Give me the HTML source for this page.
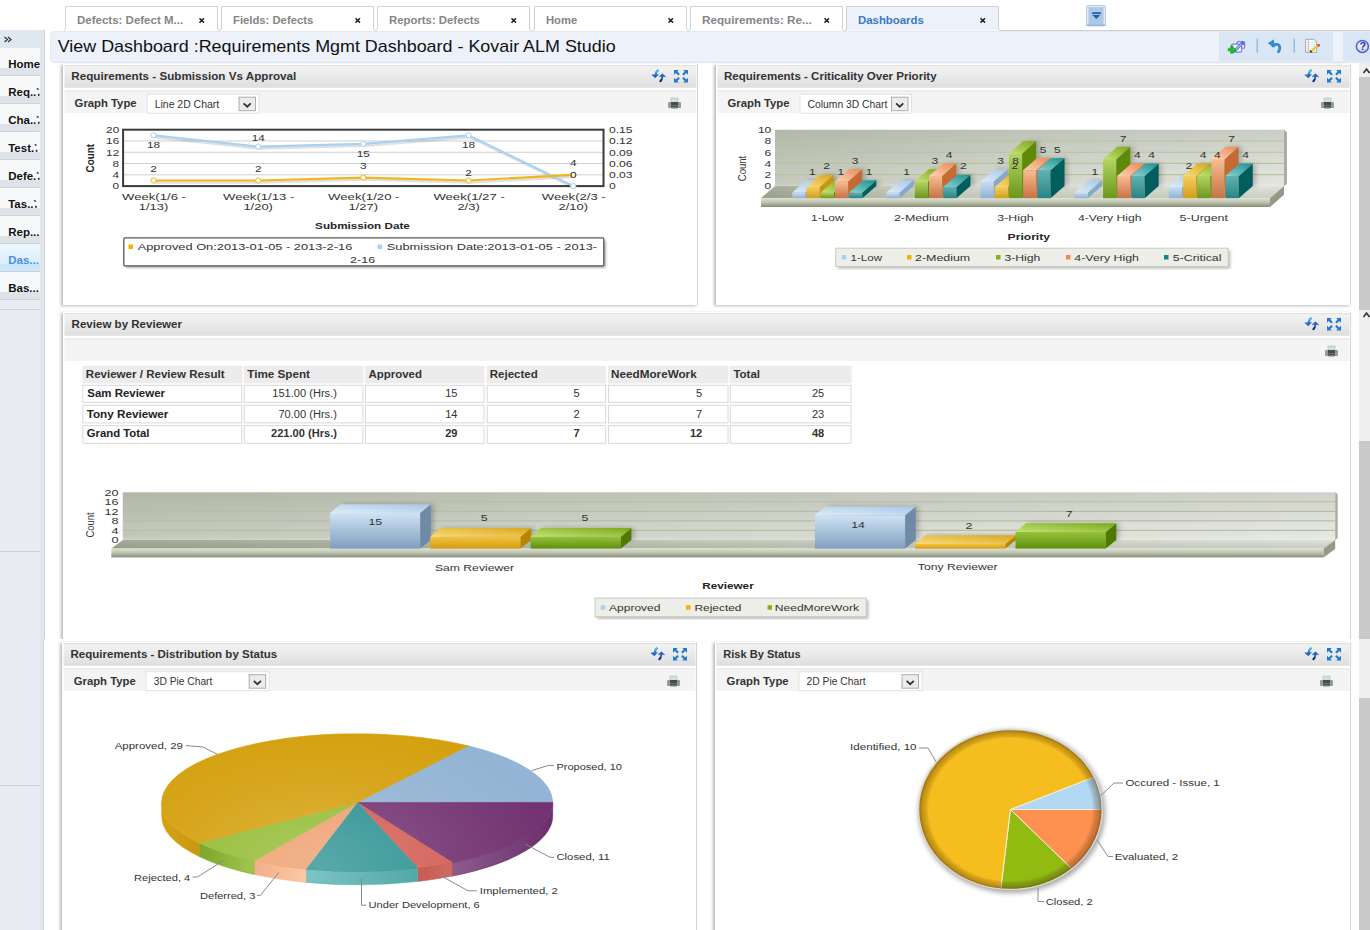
<!DOCTYPE html>
<html><head><meta charset="utf-8"><style>
html,body{margin:0;padding:0;background:#fff;width:1370px;height:930px;overflow:hidden}
svg{display:block;font-family:"Liberation Sans",sans-serif}
</style></head><body>
<svg width="1370" height="930" viewBox="0 0 1370 930">
<defs>
<linearGradient id="gHead" x1="0" y1="0" x2="0" y2="1"><stop offset="0" stop-color="#f4f4f4"/><stop offset="1" stop-color="#dedede"/></linearGradient>
<linearGradient id="gSide" x1="0" y1="0" x2="0" y2="1"><stop offset="0" stop-color="#f9fafb"/><stop offset="1" stop-color="#f3f5f7"/></linearGradient>
<linearGradient id="gSideSel" x1="0" y1="0" x2="0" y2="1"><stop offset="0" stop-color="#eef7fd"/><stop offset="1" stop-color="#d6eefb"/></linearGradient>
<filter id="shadow" x="-5%" y="-5%" width="110%" height="110%"><feGaussianBlur stdDeviation="1.4"/></filter>

<linearGradient id="gWall" x1="0" y1="0" x2="1" y2="0"><stop offset="0" stop-color="#c6cbbe"/><stop offset="0.5" stop-color="#d6d9cf"/><stop offset="1" stop-color="#e4e6df"/></linearGradient><linearGradient id="gWallV" x1="0" y1="0" x2="0" y2="1"><stop offset="0" stop-color="#4a5040" stop-opacity="0.16"/><stop offset="0.8" stop-color="#4a5040" stop-opacity="0.02"/><stop offset="1" stop-color="#fff" stop-opacity="0.1"/></linearGradient>
<linearGradient id="gFloor" x1="0" y1="0" x2="1" y2="0"><stop offset="0" stop-color="#a7ad9b"/><stop offset="0.12" stop-color="#b9bead"/><stop offset="0.35" stop-color="#d6d9cd"/><stop offset="1" stop-color="#e2e5dc"/></linearGradient>
<linearGradient id="gSlab" x1="0" y1="0" x2="0" y2="1"><stop offset="0" stop-color="#dde0d2"/><stop offset="0.5" stop-color="#bcc1ae"/><stop offset="1" stop-color="#848b74"/></linearGradient><linearGradient id="gFloorV" x1="0" y1="0" x2="0" y2="1"><stop offset="0" stop-color="#000" stop-opacity="0"/><stop offset="1" stop-color="#3a4a20" stop-opacity="0.14"/></linearGradient>
<linearGradient id="bBlueF" x1="0" y1="0" x2="0" y2="1"><stop offset="0" stop-color="#c9def3"/><stop offset="1" stop-color="#8fb0d2"/></linearGradient>
<linearGradient id="bYelF" x1="0" y1="0" x2="0" y2="1"><stop offset="0" stop-color="#f4cf62"/><stop offset="1" stop-color="#d29e1c"/></linearGradient>
<linearGradient id="bGrnF" x1="0" y1="0" x2="0" y2="1"><stop offset="0" stop-color="#b3d463"/><stop offset="1" stop-color="#6c961c"/></linearGradient>
<linearGradient id="bOrgF" x1="0" y1="0" x2="0" y2="1"><stop offset="0" stop-color="#f9bc94"/><stop offset="1" stop-color="#c47444"/></linearGradient>
<linearGradient id="bTealF" x1="0" y1="0" x2="0" y2="1"><stop offset="0" stop-color="#62b2b2"/><stop offset="1" stop-color="#2a8484"/></linearGradient>
<filter id="blur2" x="-30%" y="-30%" width="160%" height="160%"><feGaussianBlur stdDeviation="2.5"/></filter>

<linearGradient id="tBlue" x1="0" y1="1" x2="1" y2="0"><stop offset="0" stop-color="#dcedfa"/><stop offset="1" stop-color="#a9c7e6"/></linearGradient>
<linearGradient id="tYel" x1="0" y1="1" x2="1" y2="0"><stop offset="0" stop-color="#f9dc7a"/><stop offset="1" stop-color="#d9a61c"/></linearGradient>
<linearGradient id="tGrn" x1="0" y1="1" x2="1" y2="0"><stop offset="0" stop-color="#c4e276"/><stop offset="1" stop-color="#7aa818"/></linearGradient>
<linearGradient id="tOrg" x1="0" y1="1" x2="1" y2="0"><stop offset="0" stop-color="#fdd2b2"/><stop offset="1" stop-color="#e98a58"/></linearGradient>
<linearGradient id="tTeal" x1="0" y1="1" x2="1" y2="0"><stop offset="0" stop-color="#86d2d2"/><stop offset="1" stop-color="#1f8e8e"/></linearGradient>

<linearGradient id="cBlueF" x1="0" y1="0" x2="0" y2="1"><stop offset="0" stop-color="#cfe3f5"/><stop offset="1" stop-color="#7f9fbf"/></linearGradient>
<linearGradient id="cYelF" x1="0" y1="0" x2="0" y2="1"><stop offset="0" stop-color="#f3c440"/><stop offset="1" stop-color="#d59a10"/></linearGradient>
<linearGradient id="cGrnF" x1="0" y1="0" x2="0" y2="1"><stop offset="0" stop-color="#95c23a"/><stop offset="1" stop-color="#5f8f10"/></linearGradient>
<linearGradient id="gWall3" x1="0" y1="0" x2="1" y2="0"><stop offset="0" stop-color="#c4c9bc"/><stop offset="0.45" stop-color="#d5d8ce"/><stop offset="1" stop-color="#e8eae4"/></linearGradient>
<linearGradient id="gFloor3" x1="0" y1="0" x2="1" y2="0"><stop offset="0" stop-color="#a6ac99"/><stop offset="0.5" stop-color="#c8ccbd"/><stop offset="1" stop-color="#e0e3da"/></linearGradient>

<linearGradient id="pSideProp" x1="0" y1="0" x2="1" y2="0"><stop offset="0" stop-color="#7c98b4"/><stop offset="1" stop-color="#8aa6c2"/></linearGradient>
<linearGradient id="pSideClosed" x1="0" y1="0" x2="1" y2="0"><stop offset="0" stop-color="#8c5c8c"/><stop offset="1" stop-color="#6c2e6c"/></linearGradient>
<linearGradient id="pSideImpl" x1="0" y1="0" x2="1" y2="0"><stop offset="0" stop-color="#c85a52"/><stop offset="1" stop-color="#d06a62"/></linearGradient>
<linearGradient id="pSideUD" x1="0" y1="0" x2="1" y2="0"><stop offset="0" stop-color="#7cc4c4"/><stop offset="1" stop-color="#52a8a8"/></linearGradient>
<linearGradient id="pSideDef" x1="0" y1="0" x2="1" y2="0"><stop offset="0" stop-color="#f2b08a"/><stop offset="1" stop-color="#fcc8a4"/></linearGradient>
<linearGradient id="pSideRej" x1="0" y1="0" x2="1" y2="0"><stop offset="0" stop-color="#7ea42a"/><stop offset="1" stop-color="#a2c650"/></linearGradient>
<linearGradient id="pSideApp" x1="0" y1="0" x2="1" y2="0"><stop offset="0" stop-color="#d8a010"/><stop offset="1" stop-color="#c89814"/></linearGradient>
<radialGradient id="pTopShade" cx="0.5" cy="0.5" r="0.5"><stop offset="0" stop-color="#fff" stop-opacity="0.18"/><stop offset="0.7" stop-color="#fff" stop-opacity="0.08"/><stop offset="1" stop-color="#000" stop-opacity="0.0"/></radialGradient>
<radialGradient id="pOver" gradientUnits="userSpaceOnUse" cx="320" cy="865" r="190" gradientTransform="translate(320,865) scale(1.25,0.75) translate(-320,-865)"><stop offset="0" stop-color="#fff" stop-opacity="0.22"/><stop offset="0.6" stop-color="#fff" stop-opacity="0.07"/><stop offset="1" stop-color="#fff" stop-opacity="0"/></radialGradient>
<radialGradient id="q5rim" cx="0.5" cy="0.5" r="0.5"><stop offset="0.89" stop-color="#000" stop-opacity="0"/><stop offset="0.96" stop-color="#5a3a00" stop-opacity="0.33"/><stop offset="1" stop-color="#3a2400" stop-opacity="0.55"/></radialGradient>
</defs>
<rect x="0" y="0" width="1370" height="930" fill="#ffffff" />
<rect x="0" y="30" width="40" height="900" fill="#e8ebf1" />
<rect x="40" y="30" width="4" height="900" fill="#e6e6e6" />
<line x1="44.5" y1="30" x2="44.5" y2="639" stroke="#c4d4ea" stroke-width="1" />
<line x1="43.5" y1="639" x2="43.5" y2="930" stroke="#c4d4ea" stroke-width="1" />
<rect x="0" y="30" width="40" height="18" fill="#dfe7f1" />
<path d="M4.5,37 L7.5,39.5 L4.5,42 M8,37 L11,39.5 L8,42" fill="none" stroke="#333" stroke-width="1.2"/>
<rect x="0" y="48" width="40" height="20" fill="#f7f8fa" />
<rect x="0" y="68" width="40" height="7" fill="#dee3ea" />
<rect x="0" y="75" width="40" height="1" fill="#cdd2d9" />
<rect x="0" y="76" width="40" height="20" fill="#f7f8fa" />
<rect x="0" y="96" width="40" height="7" fill="#dee3ea" />
<rect x="0" y="103" width="40" height="1" fill="#cdd2d9" />
<rect x="0" y="104" width="40" height="20" fill="#f7f8fa" />
<rect x="0" y="124" width="40" height="7" fill="#dee3ea" />
<rect x="0" y="131" width="40" height="1" fill="#cdd2d9" />
<rect x="0" y="132" width="40" height="20" fill="#f7f8fa" />
<rect x="0" y="152" width="40" height="7" fill="#dee3ea" />
<rect x="0" y="159" width="40" height="1" fill="#cdd2d9" />
<rect x="0" y="160" width="40" height="20" fill="#f7f8fa" />
<rect x="0" y="180" width="40" height="7" fill="#dee3ea" />
<rect x="0" y="187" width="40" height="1" fill="#cdd2d9" />
<rect x="0" y="188" width="40" height="20" fill="#f7f8fa" />
<rect x="0" y="208" width="40" height="7" fill="#dee3ea" />
<rect x="0" y="215" width="40" height="1" fill="#cdd2d9" />
<rect x="0" y="216" width="40" height="20" fill="#f7f8fa" />
<rect x="0" y="236" width="40" height="7" fill="#dee3ea" />
<rect x="0" y="243" width="40" height="1" fill="#cdd2d9" />
<rect x="0" y="244" width="40" height="20" fill="url(#gSideSel)" />
<rect x="0" y="264" width="40" height="7" fill="#c9e7f9" />
<rect x="0" y="271" width="40" height="1" fill="#cdd2d9" />
<rect x="0" y="272" width="40" height="20" fill="#f7f8fa" />
<rect x="0" y="292" width="40" height="7" fill="#dee3ea" />
<rect x="0" y="299" width="40" height="1" fill="#cdd2d9" />
<clipPath id="sideClip"><rect x="0" y="30" width="40" height="300"/></clipPath>
<g clip-path="url(#sideClip)">
<text x="8.2" y="67.8" font-size="11.5" fill="#111" font-weight="bold" >Home</text>
<text x="8.2" y="95.8" font-size="11.5" fill="#111" font-weight="bold" >Req..</text>
<path d="M36.915703125,88.2 L38.515703125,89.6" stroke="#1a4a80" stroke-width="1.5"/>
<rect x="37.915703125" y="93.8" width="1.6" height="2" fill="#222"/>
<text x="8.2" y="123.8" font-size="11.5" fill="#111" font-weight="bold" >Cha..</text>
<path d="M36.915703125,116.2 L38.515703125,117.6" stroke="#1a4a80" stroke-width="1.5"/>
<rect x="37.915703125" y="121.8" width="1.6" height="2" fill="#222"/>
<text x="8.2" y="151.8" font-size="11.5" fill="#111" font-weight="bold" >Test.</text>
<path d="M34.788203125,144.2 L36.388203125000004,145.6" stroke="#1a4a80" stroke-width="1.5"/>
<rect x="35.788203125" y="149.8" width="1.6" height="2" fill="#222"/>
<text x="8.2" y="179.8" font-size="11.5" fill="#111" font-weight="bold" >Defe.</text>
<path d="M36.9219921875,172.2 L38.521992187500004,173.6" stroke="#1a4a80" stroke-width="1.5"/>
<rect x="37.9219921875" y="177.8" width="1.6" height="2" fill="#222"/>
<text x="8.2" y="207.8" font-size="11.5" fill="#111" font-weight="bold" >Tas..</text>
<path d="M34.1530078125,200.2 L35.7530078125,201.6" stroke="#1a4a80" stroke-width="1.5"/>
<rect x="35.1530078125" y="205.8" width="1.6" height="2" fill="#222"/>
<text x="8.2" y="235.8" font-size="11.5" fill="#111" font-weight="bold" >Rep...</text>
<text x="8.2" y="263.8" font-size="11.5" fill="#4a8ee0" font-weight="bold" >Das...</text>
<text x="8.2" y="291.8" font-size="11.5" fill="#111" font-weight="bold" >Bas...</text>
</g>
<rect x="0" y="301" width="40" height="8" fill="#e8ebf0" />
<rect x="0" y="309" width="40" height="1" fill="#cdd2d9" />
<rect x="0" y="551" width="40" height="1" fill="#cdd2d9" />
<rect x="0" y="785" width="40" height="1" fill="#cdd2d9" />
<rect x="40" y="48" width="4" height="262" fill="#e6e6e6" />
<path d="M63.5,30.5 L65.5,29.5 L65.5,6.5 L217.5,6.5 L217.5,29.5 L219.5,30.5" fill="#fff" stroke="#d2d2d2" stroke-width="1"/>
<text x="77.0" y="23.8" font-size="10.6" fill="#858585" font-weight="bold" textLength="106.1" lengthAdjust="spacingAndGlyphs" >Defects: Defect M...</text>
<path d="M199.5,18.2 L204,22.6 M204,18.2 L199.5,22.6" stroke="#222" stroke-width="1.5"/>
<path d="M219.5,30.5 L221.5,29.5 L221.5,6.5 L373.5,6.5 L373.5,29.5 L375.5,30.5" fill="#fff" stroke="#d2d2d2" stroke-width="1"/>
<text x="233.0" y="23.8" font-size="10.6" fill="#858585" font-weight="bold" textLength="80.2" lengthAdjust="spacingAndGlyphs" >Fields: Defects</text>
<path d="M355.5,18.2 L360,22.6 M360,18.2 L355.5,22.6" stroke="#222" stroke-width="1.5"/>
<path d="M375.5,30.5 L377.5,29.5 L377.5,6.5 L529.5,6.5 L529.5,29.5 L531.5,30.5" fill="#fff" stroke="#d2d2d2" stroke-width="1"/>
<text x="389.0" y="23.8" font-size="10.6" fill="#858585" font-weight="bold" textLength="90.9" lengthAdjust="spacingAndGlyphs" >Reports: Defects</text>
<path d="M511.5,18.2 L516,22.6 M516,18.2 L511.5,22.6" stroke="#222" stroke-width="1.5"/>
<path d="M532.5,30.5 L534.5,29.5 L534.5,6.5 L686.5,6.5 L686.5,29.5 L688.5,30.5" fill="#fff" stroke="#d2d2d2" stroke-width="1"/>
<text x="546.0" y="23.8" font-size="10.6" fill="#858585" font-weight="bold" textLength="31.2" lengthAdjust="spacingAndGlyphs" >Home</text>
<path d="M668.5,18.2 L673,22.6 M673,18.2 L668.5,22.6" stroke="#222" stroke-width="1.5"/>
<path d="M688.5,30.5 L690.5,29.5 L690.5,6.5 L842.5,6.5 L842.5,29.5 L844.5,30.5" fill="#fff" stroke="#d2d2d2" stroke-width="1"/>
<text x="702.0" y="23.8" font-size="10.6" fill="#858585" font-weight="bold" textLength="109.8" lengthAdjust="spacingAndGlyphs" >Requirements: Re...</text>
<path d="M824.5,18.2 L829,22.6 M829,18.2 L824.5,22.6" stroke="#222" stroke-width="1.5"/>
<path d="M844.5,30.5 L846.5,29.5 L846.5,6.5 L998.5,6.5 L998.5,29.5 L1000.5,30.5" fill="#edf2fa" stroke="#d2d2d2" stroke-width="1"/>
<text x="858.0" y="23.8" font-size="10.6" fill="#3b78c4" font-weight="bold" textLength="65.8" lengthAdjust="spacingAndGlyphs" >Dashboards</text>
<path d="M980.5,18.2 L985,22.6 M985,18.2 L980.5,22.6" stroke="#222" stroke-width="1.5"/>
<line x1="999" y1="30.5" x2="1370" y2="30.5" stroke="#d0d0d0" stroke-width="1" />
<rect x="1086.5" y="5.5" width="19" height="20.5" rx="1.5" fill="#dce8f6" stroke="#bcd0ea" stroke-width="1"/>
<rect x="1088.5" y="7.2" width="15" height="18" fill="#afc8e6"/>
<rect x="1086.5" y="24.5" width="19" height="1.5" fill="#9cb6d8"/>
<path d="M1092.4,15.1 L1100.3,15.1 L1096.35,19 Z" fill="#1a5cb0"/><rect x="1091.9" y="12.2" width="9.3" height="1.8" rx="0.8" fill="#1a5cb0"/>
<rect x="50" y="31" width="1330" height="31.5" rx="4" fill="#edf2fa"/>
<rect x="50.5" y="31.5" width="1330" height="31" rx="4" fill="none" stroke="#e3eaf4" stroke-width="1"/>
<line x1="54" y1="60.6" x2="1370" y2="60.6" stroke="#f2f5fb" stroke-width="1" />
<line x1="54" y1="62" x2="1370" y2="62" stroke="#dfe7f3" stroke-width="1.4" />
<rect x="1219" y="32" width="114" height="29" fill="#dbe6f4" />
<rect x="1343" y="32" width="27" height="29" fill="#dbe6f4" />
<rect x="1237.2" y="41.6" width="7.4" height="6.6" rx="1" fill="#fff" stroke="#6c80e2" stroke-width="1.2"/>
<rect x="1231.6" y="44.2" width="10" height="8" rx="1.2" fill="#f4f6ff" stroke="#6c80e2" stroke-width="1.2"/>
<path d="M1235,50.5 L1242.5,43" stroke="#4a62d0" stroke-width="2.6" stroke-linecap="round"/>
<path d="M1235,50.5 L1242.5,43" stroke="#fff" stroke-width="1" stroke-linecap="round"/>
<path d="M1240.3,42.2 L1243.8,42.2 L1243.8,45.7 Z" fill="#4a62d0"/>
<path d="M1230.5,46 L1233.3,46 L1233.3,48.4 L1235.6,48.4 L1235.6,51.1 L1233.3,51.1 L1233.3,53.2 L1230.5,53.2 L1230.5,51.1 L1228.2,51.1 L1228.2,48.4 L1230.5,48.4 Z" fill="#1fbf2a" stroke="#0a9a12" stroke-width="0.5"/>
<line x1="1257.2" y1="38.8" x2="1257.2" y2="52.6" stroke="#93bde2" stroke-width="1.5" />
<line x1="1294.2" y1="38.8" x2="1294.2" y2="52.6" stroke="#93bde2" stroke-width="1.5" />
<path d="M1272.8,45.8 C1275.5,43.6 1279.2,43.8 1279.8,47.2 C1280,49 1279.3,50.6 1278.5,51.8" fill="none" stroke="#2f8bd2" stroke-width="2.8" stroke-linecap="round"/>
<path d="M1268.3,43.3 L1273.6,39.9 L1274.3,47.2 Z" fill="#2f8bd2" stroke="#2f8bd2" stroke-width="0.8" stroke-linejoin="round"/>
<path d="M1305.6,39.4 L1314,39.4 L1316.6,42 L1316.6,52.4 L1305.6,52.4 Z" fill="#fdfdfd" stroke="#9aa6a6" stroke-width="0.9"/>
<line x1="1306" y1="42.5" x2="1316.2" y2="42.5" stroke="#cfe0f0" stroke-width="0.6" />
<line x1="1306" y1="44.6" x2="1316.2" y2="44.6" stroke="#cfe0f0" stroke-width="0.6" />
<line x1="1306" y1="46.7" x2="1316.2" y2="46.7" stroke="#cfe0f0" stroke-width="0.6" />
<line x1="1306" y1="48.8" x2="1316.2" y2="48.8" stroke="#cfe0f0" stroke-width="0.6" />
<line x1="1306" y1="50.9" x2="1316.2" y2="50.9" stroke="#cfe0f0" stroke-width="0.6" />
<line x1="1308.4" y1="39.8" x2="1308.4" y2="52" stroke="#f0a0a0" stroke-width="0.9" />
<path d="M1310.3,52 L1318.2,45.2" stroke="#e9c93a" stroke-width="2.4" stroke-linecap="butt"/>
<path d="M1310.3,52 L1311.4,51" stroke="#333" stroke-width="2.4"/>
<circle cx="1318.6" cy="45.3" r="1.4" fill="#e84050"/>
<defs><radialGradient id="gHelp" cx="0.4" cy="0.35" r="0.7"><stop offset="0" stop-color="#ffffff"/><stop offset="1" stop-color="#c9cbd4"/></radialGradient></defs>
<circle cx="1362.4" cy="46.4" r="6" fill="url(#gHelp)" stroke="#4b5fe2" stroke-width="1.5"/>
<text x="1362.6" y="50.3" font-size="10.5" font-weight="bold" fill="#1a30b0" text-anchor="middle">?</text>
<text x="57.7" y="51.7" font-size="17" fill="#111" textLength="558.0" lengthAdjust="spacingAndGlyphs" >View Dashboard :Requirements Mgmt Dashboard - Kovair ALM Studio</text>
<rect x="1359" y="63" width="11" height="867" fill="#efefef" />
<rect x="1359" y="77" width="11" height="233" fill="#c9c9c9" />
<rect x="1359" y="441" width="11" height="198" fill="#c9c9c9" />
<rect x="1359" y="698" width="11" height="232" fill="#c9c9c9" />
<path d="M1363.5,73 L1366.5,69 L1369.5,73" fill="none" stroke="#333" stroke-width="1.6"/>
<path d="M1363.5,317 L1366.5,313 L1369.5,317" fill="none" stroke="#333" stroke-width="1.6"/>
<rect x="61" y="65" width="635" height="241" fill="#bbb" filter="url(#shadow)"/>
<rect x="63" y="64" width="635" height="241" fill="#fff" />
<line x1="697.5" y1="64" x2="697.5" y2="305" stroke="#d6d6d6" stroke-width="1" />
<rect x="64.5" y="65" width="632" height="22.8" fill="url(#gHead)" />
<line x1="64.5" y1="65.6" x2="696.5" y2="65.6" stroke="#e2e2e2" stroke-width="1.2" />
<rect x="64.5" y="90.3" width="632" height="22.7" fill="#f4f4f4" />
<line x1="64.5" y1="90.9" x2="696.5" y2="90.9" stroke="#e8e8e8" stroke-width="1.4" />
<text x="71.3" y="80.0" font-size="10.6" fill="#333" font-weight="bold" textLength="225.0" lengthAdjust="spacingAndGlyphs" >Requirements - Submission Vs Approval</text>
<rect x="714" y="65" width="635" height="241" fill="#bbb" filter="url(#shadow)"/>
<rect x="716" y="64" width="635" height="241" fill="#fff" />
<line x1="1350.5" y1="64" x2="1350.5" y2="305" stroke="#d6d6d6" stroke-width="1" />
<rect x="717.5" y="65" width="632" height="22.8" fill="url(#gHead)" />
<line x1="717.5" y1="65.6" x2="1349.5" y2="65.6" stroke="#e2e2e2" stroke-width="1.2" />
<rect x="717.5" y="90.3" width="632" height="22.7" fill="#f4f4f4" />
<line x1="717.5" y1="90.9" x2="1349.5" y2="90.9" stroke="#e8e8e8" stroke-width="1.4" />
<text x="724.0" y="80.0" font-size="10.6" fill="#333" font-weight="bold" textLength="212.6" lengthAdjust="spacingAndGlyphs" >Requirements - Criticality Over Priority</text>
<rect x="61" y="313" width="1288" height="327" fill="#bbb" filter="url(#shadow)"/>
<rect x="63" y="312" width="1288" height="327" fill="#fff" />
<line x1="1350.5" y1="312" x2="1350.5" y2="639" stroke="#d6d6d6" stroke-width="1" />
<rect x="64.5" y="313" width="1285" height="22.8" fill="url(#gHead)" />
<line x1="64.5" y1="313.6" x2="1349.5" y2="313.6" stroke="#e2e2e2" stroke-width="1.2" />
<rect x="64.5" y="338.3" width="1285" height="22.7" fill="#f4f4f4" />
<line x1="64.5" y1="338.9" x2="1349.5" y2="338.9" stroke="#e8e8e8" stroke-width="1.4" />
<text x="71.6" y="328.0" font-size="10.6" fill="#333" font-weight="bold" textLength="110.4" lengthAdjust="spacingAndGlyphs" >Review by Reviewer</text>
<rect x="50" y="639" width="1303" height="3.5" fill="#fff" />
<rect x="60" y="643" width="635" height="298" fill="#bbb" filter="url(#shadow)"/>
<rect x="62" y="642" width="635" height="298" fill="#fff" />
<line x1="696.5" y1="642" x2="696.5" y2="940" stroke="#d6d6d6" stroke-width="1" />
<rect x="63.5" y="643" width="632" height="22.8" fill="url(#gHead)" />
<line x1="63.5" y1="643.6" x2="695.5" y2="643.6" stroke="#e2e2e2" stroke-width="1.2" />
<rect x="63.5" y="668.3" width="632" height="22.7" fill="#f4f4f4" />
<line x1="63.5" y1="668.9" x2="695.5" y2="668.9" stroke="#e8e8e8" stroke-width="1.4" />
<text x="70.5" y="658.0" font-size="10.6" fill="#333" font-weight="bold" textLength="206.7" lengthAdjust="spacingAndGlyphs" >Requirements - Distribution by Status</text>
<rect x="713" y="643" width="636" height="298" fill="#bbb" filter="url(#shadow)"/>
<rect x="715" y="642" width="636" height="298" fill="#fff" />
<line x1="1350.5" y1="642" x2="1350.5" y2="940" stroke="#d6d6d6" stroke-width="1" />
<rect x="716.5" y="643" width="633" height="22.8" fill="url(#gHead)" />
<line x1="716.5" y1="643.6" x2="1349.5" y2="643.6" stroke="#e2e2e2" stroke-width="1.2" />
<rect x="716.5" y="668.3" width="633" height="22.7" fill="#f4f4f4" />
<line x1="716.5" y1="668.9" x2="1349.5" y2="668.9" stroke="#e8e8e8" stroke-width="1.4" />
<text x="723.3" y="658.0" font-size="10.6" fill="#333" font-weight="bold" textLength="77.4" lengthAdjust="spacingAndGlyphs" >Risk By Status</text>
<g transform="translate(652,70)"><path d="M5.7,0.5 C4.5,1.6 3.7,3.1 3.5,5.2" fill="none" stroke="#2a82d4" stroke-width="2.1" stroke-linecap="round"/><path d="M5.7,0.5 C5.2,1.0 4.8,1.5 4.5,2.0" fill="none" stroke="#3cc0ea" stroke-width="1.9" stroke-linecap="round"/><path d="M-0.2,4.9 L6.5,4.4 L3.4,7.9 Z" fill="#2466c6" stroke="#2466c6" stroke-width="0.5" stroke-linejoin="round"/><path d="M7.1,6.6 L10.4,3.7 L13.7,6.6 Z" fill="#2a66c4" stroke="#2a66c4" stroke-width="0.5" stroke-linejoin="round"/><path d="M10.5,6.2 C10.3,8.3 9.6,10.1 8.4,11.2" fill="none" stroke="#2a5cb8" stroke-width="1.9" stroke-linecap="round"/><path d="M9.3,9.9 C9.0,10.4 8.7,10.8 8.4,11.2" fill="none" stroke="#1c2c6c" stroke-width="1.9" stroke-linecap="round"/></g>
<g transform="translate(674,70)" fill="#2179cf"><path d="M0,0 L4.8,0 L3.3,1.5 L5.8,4 L4.3,5.5 L1.8,3 L0,4.8 Z"/><path d="M14,0 L9.2,0 L10.7,1.5 L8.2,4 L9.7,5.5 L12.2,3 L14,4.8 Z"/><path d="M0,12.5 L4.8,12.5 L3.3,11 L5.8,8.5 L4.3,7 L1.8,9.5 L0,7.7 Z"/><path d="M14,12.5 L9.2,12.5 L10.7,11 L8.2,8.5 L9.7,7 L12.2,9.5 L14,7.7 Z"/></g>
<g transform="translate(1305,70)"><path d="M5.7,0.5 C4.5,1.6 3.7,3.1 3.5,5.2" fill="none" stroke="#2a82d4" stroke-width="2.1" stroke-linecap="round"/><path d="M5.7,0.5 C5.2,1.0 4.8,1.5 4.5,2.0" fill="none" stroke="#3cc0ea" stroke-width="1.9" stroke-linecap="round"/><path d="M-0.2,4.9 L6.5,4.4 L3.4,7.9 Z" fill="#2466c6" stroke="#2466c6" stroke-width="0.5" stroke-linejoin="round"/><path d="M7.1,6.6 L10.4,3.7 L13.7,6.6 Z" fill="#2a66c4" stroke="#2a66c4" stroke-width="0.5" stroke-linejoin="round"/><path d="M10.5,6.2 C10.3,8.3 9.6,10.1 8.4,11.2" fill="none" stroke="#2a5cb8" stroke-width="1.9" stroke-linecap="round"/><path d="M9.3,9.9 C9.0,10.4 8.7,10.8 8.4,11.2" fill="none" stroke="#1c2c6c" stroke-width="1.9" stroke-linecap="round"/></g>
<g transform="translate(1327,70)" fill="#2179cf"><path d="M0,0 L4.8,0 L3.3,1.5 L5.8,4 L4.3,5.5 L1.8,3 L0,4.8 Z"/><path d="M14,0 L9.2,0 L10.7,1.5 L8.2,4 L9.7,5.5 L12.2,3 L14,4.8 Z"/><path d="M0,12.5 L4.8,12.5 L3.3,11 L5.8,8.5 L4.3,7 L1.8,9.5 L0,7.7 Z"/><path d="M14,12.5 L9.2,12.5 L10.7,11 L8.2,8.5 L9.7,7 L12.2,9.5 L14,7.7 Z"/></g>
<g transform="translate(1305,318)"><path d="M5.7,0.5 C4.5,1.6 3.7,3.1 3.5,5.2" fill="none" stroke="#2a82d4" stroke-width="2.1" stroke-linecap="round"/><path d="M5.7,0.5 C5.2,1.0 4.8,1.5 4.5,2.0" fill="none" stroke="#3cc0ea" stroke-width="1.9" stroke-linecap="round"/><path d="M-0.2,4.9 L6.5,4.4 L3.4,7.9 Z" fill="#2466c6" stroke="#2466c6" stroke-width="0.5" stroke-linejoin="round"/><path d="M7.1,6.6 L10.4,3.7 L13.7,6.6 Z" fill="#2a66c4" stroke="#2a66c4" stroke-width="0.5" stroke-linejoin="round"/><path d="M10.5,6.2 C10.3,8.3 9.6,10.1 8.4,11.2" fill="none" stroke="#2a5cb8" stroke-width="1.9" stroke-linecap="round"/><path d="M9.3,9.9 C9.0,10.4 8.7,10.8 8.4,11.2" fill="none" stroke="#1c2c6c" stroke-width="1.9" stroke-linecap="round"/></g>
<g transform="translate(1327,318)" fill="#2179cf"><path d="M0,0 L4.8,0 L3.3,1.5 L5.8,4 L4.3,5.5 L1.8,3 L0,4.8 Z"/><path d="M14,0 L9.2,0 L10.7,1.5 L8.2,4 L9.7,5.5 L12.2,3 L14,4.8 Z"/><path d="M0,12.5 L4.8,12.5 L3.3,11 L5.8,8.5 L4.3,7 L1.8,9.5 L0,7.7 Z"/><path d="M14,12.5 L9.2,12.5 L10.7,11 L8.2,8.5 L9.7,7 L12.2,9.5 L14,7.7 Z"/></g>
<g transform="translate(651,648)"><path d="M5.7,0.5 C4.5,1.6 3.7,3.1 3.5,5.2" fill="none" stroke="#2a82d4" stroke-width="2.1" stroke-linecap="round"/><path d="M5.7,0.5 C5.2,1.0 4.8,1.5 4.5,2.0" fill="none" stroke="#3cc0ea" stroke-width="1.9" stroke-linecap="round"/><path d="M-0.2,4.9 L6.5,4.4 L3.4,7.9 Z" fill="#2466c6" stroke="#2466c6" stroke-width="0.5" stroke-linejoin="round"/><path d="M7.1,6.6 L10.4,3.7 L13.7,6.6 Z" fill="#2a66c4" stroke="#2a66c4" stroke-width="0.5" stroke-linejoin="round"/><path d="M10.5,6.2 C10.3,8.3 9.6,10.1 8.4,11.2" fill="none" stroke="#2a5cb8" stroke-width="1.9" stroke-linecap="round"/><path d="M9.3,9.9 C9.0,10.4 8.7,10.8 8.4,11.2" fill="none" stroke="#1c2c6c" stroke-width="1.9" stroke-linecap="round"/></g>
<g transform="translate(673,648)" fill="#2179cf"><path d="M0,0 L4.8,0 L3.3,1.5 L5.8,4 L4.3,5.5 L1.8,3 L0,4.8 Z"/><path d="M14,0 L9.2,0 L10.7,1.5 L8.2,4 L9.7,5.5 L12.2,3 L14,4.8 Z"/><path d="M0,12.5 L4.8,12.5 L3.3,11 L5.8,8.5 L4.3,7 L1.8,9.5 L0,7.7 Z"/><path d="M14,12.5 L9.2,12.5 L10.7,11 L8.2,8.5 L9.7,7 L12.2,9.5 L14,7.7 Z"/></g>
<g transform="translate(1305,648)"><path d="M5.7,0.5 C4.5,1.6 3.7,3.1 3.5,5.2" fill="none" stroke="#2a82d4" stroke-width="2.1" stroke-linecap="round"/><path d="M5.7,0.5 C5.2,1.0 4.8,1.5 4.5,2.0" fill="none" stroke="#3cc0ea" stroke-width="1.9" stroke-linecap="round"/><path d="M-0.2,4.9 L6.5,4.4 L3.4,7.9 Z" fill="#2466c6" stroke="#2466c6" stroke-width="0.5" stroke-linejoin="round"/><path d="M7.1,6.6 L10.4,3.7 L13.7,6.6 Z" fill="#2a66c4" stroke="#2a66c4" stroke-width="0.5" stroke-linejoin="round"/><path d="M10.5,6.2 C10.3,8.3 9.6,10.1 8.4,11.2" fill="none" stroke="#2a5cb8" stroke-width="1.9" stroke-linecap="round"/><path d="M9.3,9.9 C9.0,10.4 8.7,10.8 8.4,11.2" fill="none" stroke="#1c2c6c" stroke-width="1.9" stroke-linecap="round"/></g>
<g transform="translate(1327,648)" fill="#2179cf"><path d="M0,0 L4.8,0 L3.3,1.5 L5.8,4 L4.3,5.5 L1.8,3 L0,4.8 Z"/><path d="M14,0 L9.2,0 L10.7,1.5 L8.2,4 L9.7,5.5 L12.2,3 L14,4.8 Z"/><path d="M0,12.5 L4.8,12.5 L3.3,11 L5.8,8.5 L4.3,7 L1.8,9.5 L0,7.7 Z"/><path d="M14,12.5 L9.2,12.5 L10.7,11 L8.2,8.5 L9.7,7 L12.2,9.5 L14,7.7 Z"/></g>
<g transform="translate(668,98)"><rect x="3" y="0" width="7" height="4.5" fill="#cfe0e0" stroke="#a8b8b8" stroke-width="0.6"/><rect x="0" y="4" width="13" height="6" rx="1" fill="#9a9a9a"/><rect x="3" y="4" width="7" height="6" fill="#4a4a4a"/><rect x="3" y="7" width="7" height="1.2" fill="#6a6a7a"/><rect x="10.3" y="5.2" width="1.4" height="1.8" fill="#3ad040"/><rect x="3.5" y="9.5" width="6" height="1.5" fill="#a8b8b8"/></g>
<g transform="translate(1321,98)"><rect x="3" y="0" width="7" height="4.5" fill="#cfe0e0" stroke="#a8b8b8" stroke-width="0.6"/><rect x="0" y="4" width="13" height="6" rx="1" fill="#9a9a9a"/><rect x="3" y="4" width="7" height="6" fill="#4a4a4a"/><rect x="3" y="7" width="7" height="1.2" fill="#6a6a7a"/><rect x="10.3" y="5.2" width="1.4" height="1.8" fill="#3ad040"/><rect x="3.5" y="9.5" width="6" height="1.5" fill="#a8b8b8"/></g>
<g transform="translate(1325,346)"><rect x="3" y="0" width="7" height="4.5" fill="#cfe0e0" stroke="#a8b8b8" stroke-width="0.6"/><rect x="0" y="4" width="13" height="6" rx="1" fill="#9a9a9a"/><rect x="3" y="4" width="7" height="6" fill="#4a4a4a"/><rect x="3" y="7" width="7" height="1.2" fill="#6a6a7a"/><rect x="10.3" y="5.2" width="1.4" height="1.8" fill="#3ad040"/><rect x="3.5" y="9.5" width="6" height="1.5" fill="#a8b8b8"/></g>
<g transform="translate(667,676)"><rect x="3" y="0" width="7" height="4.5" fill="#cfe0e0" stroke="#a8b8b8" stroke-width="0.6"/><rect x="0" y="4" width="13" height="6" rx="1" fill="#9a9a9a"/><rect x="3" y="4" width="7" height="6" fill="#4a4a4a"/><rect x="3" y="7" width="7" height="1.2" fill="#6a6a7a"/><rect x="10.3" y="5.2" width="1.4" height="1.8" fill="#3ad040"/><rect x="3.5" y="9.5" width="6" height="1.5" fill="#a8b8b8"/></g>
<g transform="translate(1320,676)"><rect x="3" y="0" width="7" height="4.5" fill="#cfe0e0" stroke="#a8b8b8" stroke-width="0.6"/><rect x="0" y="4" width="13" height="6" rx="1" fill="#9a9a9a"/><rect x="3" y="4" width="7" height="6" fill="#4a4a4a"/><rect x="3" y="7" width="7" height="1.2" fill="#6a6a7a"/><rect x="10.3" y="5.2" width="1.4" height="1.8" fill="#3ad040"/><rect x="3.5" y="9.5" width="6" height="1.5" fill="#a8b8b8"/></g>
<text x="74.6" y="107.3" font-size="10.8" fill="#333" font-weight="bold" textLength="62.0" lengthAdjust="spacingAndGlyphs" >Graph Type</text>
<rect x="147.1" y="94.2" width="111.9" height="19" fill="#fff" stroke="#e2e2e2"/>
<rect x="239.0" y="97.2" width="16.5" height="13.5" fill="#ececec" stroke="#adadad"/>
<path d="M243.6,103.3 L247.2,106.7 L250.8,103.3" fill="none" stroke="#333" stroke-width="1.8"/>
<text x="154.7" y="107.5" font-size="10" fill="#333" textLength="64.5" lengthAdjust="spacingAndGlyphs" >Line 2D Chart</text>
<text x="727.5" y="107.3" font-size="10.8" fill="#333" font-weight="bold" textLength="62.0" lengthAdjust="spacingAndGlyphs" >Graph Type</text>
<rect x="800.0" y="94.2" width="111.5" height="19" fill="#fff" stroke="#e2e2e2"/>
<rect x="891.5" y="97.2" width="16.5" height="13.5" fill="#ececec" stroke="#adadad"/>
<path d="M896.1,103.3 L899.7,106.7 L903.3,103.3" fill="none" stroke="#333" stroke-width="1.8"/>
<text x="807.6" y="107.5" font-size="10" fill="#333" textLength="79.8" lengthAdjust="spacingAndGlyphs" >Column 3D Chart</text>
<text x="73.7" y="684.7" font-size="10.8" fill="#333" font-weight="bold" textLength="62.0" lengthAdjust="spacingAndGlyphs" >Graph Type</text>
<rect x="146.0" y="671.7" width="123.19999999999999" height="19" fill="#fff" stroke="#e2e2e2"/>
<rect x="249.2" y="674.7" width="16.5" height="13.5" fill="#ececec" stroke="#adadad"/>
<path d="M253.79999999999998,680.8000000000001 L257.4,684.2 L261.0,680.8000000000001" fill="none" stroke="#333" stroke-width="1.8"/>
<text x="153.7" y="685.0" font-size="10" fill="#333" textLength="58.7" lengthAdjust="spacingAndGlyphs" >3D Pie Chart</text>
<text x="726.6" y="684.7" font-size="10.8" fill="#333" font-weight="bold" textLength="62.0" lengthAdjust="spacingAndGlyphs" >Graph Type</text>
<rect x="798.9" y="671.7" width="123.10000000000002" height="19" fill="#fff" stroke="#e2e2e2"/>
<rect x="902.0" y="674.7" width="16.5" height="13.5" fill="#ececec" stroke="#adadad"/>
<path d="M906.6,680.8000000000001 L910.2,684.2 L913.8,680.8000000000001" fill="none" stroke="#333" stroke-width="1.8"/>
<text x="806.5" y="685.0" font-size="10" fill="#333" textLength="59.0" lengthAdjust="spacingAndGlyphs" >2D Pie Chart</text>
<text x="119.2" y="132.9" font-size="8.7" fill="#333" text-anchor="end" textLength="13.1" lengthAdjust="spacingAndGlyphs" >20</text>
<text x="609.0" y="132.9" font-size="8.7" fill="#333" textLength="23.6" lengthAdjust="spacingAndGlyphs" >0.15</text>
<line x1="123.1" y1="140.98" x2="603.5" y2="140.98" stroke="#d0d0d0" stroke-width="1" />
<text x="119.2" y="144.2" font-size="8.7" fill="#333" text-anchor="end" textLength="13.1" lengthAdjust="spacingAndGlyphs" >16</text>
<text x="609.0" y="144.2" font-size="8.7" fill="#333" textLength="23.6" lengthAdjust="spacingAndGlyphs" >0.12</text>
<line x1="123.1" y1="152.26" x2="603.5" y2="152.26" stroke="#d0d0d0" stroke-width="1" />
<text x="119.2" y="155.5" font-size="8.7" fill="#333" text-anchor="end" textLength="13.1" lengthAdjust="spacingAndGlyphs" >12</text>
<text x="609.0" y="155.5" font-size="8.7" fill="#333" textLength="23.6" lengthAdjust="spacingAndGlyphs" >0.09</text>
<line x1="123.1" y1="163.54" x2="603.5" y2="163.54" stroke="#d0d0d0" stroke-width="1" />
<text x="119.2" y="166.7" font-size="8.7" fill="#333" text-anchor="end" textLength="6.6" lengthAdjust="spacingAndGlyphs" >8</text>
<text x="609.0" y="166.7" font-size="8.7" fill="#333" textLength="23.6" lengthAdjust="spacingAndGlyphs" >0.06</text>
<line x1="123.1" y1="174.82" x2="603.5" y2="174.82" stroke="#d0d0d0" stroke-width="1" />
<text x="119.2" y="178.0" font-size="8.7" fill="#333" text-anchor="end" textLength="6.6" lengthAdjust="spacingAndGlyphs" >4</text>
<text x="609.0" y="178.0" font-size="8.7" fill="#333" textLength="23.6" lengthAdjust="spacingAndGlyphs" >0.03</text>
<text x="119.2" y="189.3" font-size="8.7" fill="#333" text-anchor="end" textLength="6.6" lengthAdjust="spacingAndGlyphs" >0</text>
<text x="609.0" y="189.3" font-size="8.7" fill="#333" textLength="6.7" lengthAdjust="spacingAndGlyphs" >0</text>
<rect x="123.1" y="129.7" width="480.4" height="56.400000000000006" fill="none" stroke="#3a3a3a" stroke-width="2"/>
<polyline points="153.5,135.3 258.2,146.6 363.3,143.8 468.6,135.3 573.3,186.1" transform="translate(1.5,2)" fill="none" stroke="#000" stroke-opacity="0.12" stroke-width="2.5"/>
<polyline points="153.5,180.5 258.2,180.5 363.3,177.6 468.6,180.5 573.3,174.8" transform="translate(1.5,2)" fill="none" stroke="#000" stroke-opacity="0.12" stroke-width="2.5"/>
<polyline points="153.5,135.3 258.2,146.6 363.3,143.8 468.6,135.3 573.3,186.1" fill="none" stroke="#a9d2f2" stroke-width="2.2"/>
<polyline points="153.5,180.5 258.2,180.5 363.3,177.6 468.6,180.5 573.3,174.8" fill="none" stroke="#f2b51a" stroke-width="2.2"/>
<circle cx="153.5" cy="135.3" r="2.6" fill="#fff" stroke="#a9d2f2" stroke-width="1"/>
<circle cx="258.2" cy="146.6" r="2.6" fill="#fff" stroke="#a9d2f2" stroke-width="1"/>
<circle cx="363.3" cy="143.8" r="2.6" fill="#fff" stroke="#a9d2f2" stroke-width="1"/>
<circle cx="468.6" cy="135.3" r="2.6" fill="#fff" stroke="#a9d2f2" stroke-width="1"/>
<circle cx="573.3" cy="186.1" r="2.6" fill="#fff" stroke="#a9d2f2" stroke-width="1"/>
<circle cx="153.5" cy="180.5" r="2.6" fill="#fff" stroke="#f2b51a" stroke-width="1"/>
<circle cx="258.2" cy="180.5" r="2.6" fill="#fff" stroke="#f2b51a" stroke-width="1"/>
<circle cx="363.3" cy="177.6" r="2.6" fill="#fff" stroke="#f2b51a" stroke-width="1"/>
<circle cx="468.6" cy="180.5" r="2.6" fill="#fff" stroke="#f2b51a" stroke-width="1"/>
<circle cx="573.3" cy="174.8" r="2.6" fill="#fff" stroke="#f2b51a" stroke-width="1"/>
<text x="153.5" y="147.7" font-size="8.7" fill="#333" text-anchor="middle" textLength="13.1" lengthAdjust="spacingAndGlyphs" >18</text>
<text x="258.2" y="141.3" font-size="8.7" fill="#333" text-anchor="middle" textLength="13.1" lengthAdjust="spacingAndGlyphs" >14</text>
<text x="363.3" y="156.5" font-size="8.7" fill="#333" text-anchor="middle" textLength="13.1" lengthAdjust="spacingAndGlyphs" >15</text>
<text x="468.6" y="147.8" font-size="8.7" fill="#333" text-anchor="middle" textLength="13.1" lengthAdjust="spacingAndGlyphs" >18</text>
<text x="573.3" y="177.7" font-size="8.7" fill="#333" text-anchor="middle" textLength="6.6" lengthAdjust="spacingAndGlyphs" >0</text>
<text x="153.5" y="172.4" font-size="8.7" fill="#333" text-anchor="middle" textLength="6.6" lengthAdjust="spacingAndGlyphs" >2</text>
<text x="258.2" y="172.4" font-size="8.7" fill="#333" text-anchor="middle" textLength="6.6" lengthAdjust="spacingAndGlyphs" >2</text>
<text x="363.3" y="168.8" font-size="8.7" fill="#333" text-anchor="middle" textLength="6.6" lengthAdjust="spacingAndGlyphs" >3</text>
<text x="468.6" y="175.9" font-size="8.7" fill="#333" text-anchor="middle" textLength="6.6" lengthAdjust="spacingAndGlyphs" >2</text>
<text x="573.3" y="166.2" font-size="8.7" fill="#333" text-anchor="middle" textLength="6.6" lengthAdjust="spacingAndGlyphs" >4</text>
<text x="154.0" y="200.3" font-size="8.96" fill="#333" text-anchor="middle" textLength="63.9" lengthAdjust="spacingAndGlyphs" >Week(1/6 -</text>
<text x="153.5" y="209.8" font-size="8.96" fill="#333" text-anchor="middle" textLength="29.5" lengthAdjust="spacingAndGlyphs" >1/13)</text>
<text x="258.7" y="200.3" font-size="8.96" fill="#333" text-anchor="middle" textLength="71.4" lengthAdjust="spacingAndGlyphs" >Week(1/13 -</text>
<text x="258.2" y="209.8" font-size="8.96" fill="#333" text-anchor="middle" textLength="29.5" lengthAdjust="spacingAndGlyphs" >1/20)</text>
<text x="363.8" y="200.3" font-size="8.96" fill="#333" text-anchor="middle" textLength="71.4" lengthAdjust="spacingAndGlyphs" >Week(1/20 -</text>
<text x="363.3" y="209.8" font-size="8.96" fill="#333" text-anchor="middle" textLength="29.5" lengthAdjust="spacingAndGlyphs" >1/27)</text>
<text x="469.1" y="200.3" font-size="8.96" fill="#333" text-anchor="middle" textLength="71.4" lengthAdjust="spacingAndGlyphs" >Week(1/27 -</text>
<text x="468.6" y="209.8" font-size="8.96" fill="#333" text-anchor="middle" textLength="22.4" lengthAdjust="spacingAndGlyphs" >2/3)</text>
<text x="573.8" y="200.3" font-size="8.96" fill="#333" text-anchor="middle" textLength="63.9" lengthAdjust="spacingAndGlyphs" >Week(2/3 -</text>
<text x="573.3" y="209.8" font-size="8.96" fill="#333" text-anchor="middle" textLength="29.5" lengthAdjust="spacingAndGlyphs" >2/10)</text>
<text x="315.1" y="228.6" font-size="9.8" fill="#222" font-weight="bold" textLength="94.7" lengthAdjust="spacingAndGlyphs" >Submission Date</text>
<g transform="translate(86.5,158.2) rotate(-90)"><text x="0" y="7" font-size="10.5" font-weight="bold" fill="#222" text-anchor="middle" textLength="28.4" lengthAdjust="spacingAndGlyphs">Count</text></g>
<rect x="125.5" y="240.5" width="480" height="27" fill="#999" filter="url(#shadow)"/>
<rect x="123.8" y="237.8" width="480" height="28" rx="1" fill="#fff" stroke="#5a5a5a" stroke-width="1.3"/>
<rect x="128.5" y="244.5" width="4.5" height="4.5" fill="#f3b200" />
<text x="137.7" y="249.8" font-size="8.53" fill="#333" textLength="214.6" lengthAdjust="spacingAndGlyphs" >Approved On:2013-01-05 - 2013-2-16</text>
<rect x="377.5" y="244.5" width="4.5" height="4.5" fill="#a9d2f2" />
<text x="386.8" y="249.8" font-size="8.53" fill="#333" textLength="210.3" lengthAdjust="spacingAndGlyphs" >Submission Date:2013-01-05 - 2013-</text>
<text x="362.6" y="263.3" font-size="8.53" fill="#333" text-anchor="middle" textLength="25.0" lengthAdjust="spacingAndGlyphs" >2-16</text>
<rect x="775" y="129.8" width="509" height="56.099999999999994" fill="url(#gWall)" />
<rect x="775" y="129.8" width="509" height="56.099999999999994" fill="url(#gWallV)" />
<path d="M1284,129.8 L1287,132.3 L1287,183.9 L1284,185.9 Z" fill="#a9ae9e"/>
<line x1="775" y1="174.68" x2="1284" y2="174.68" stroke="#b6c4a0" stroke-width="1.2" />
<line x1="775" y1="163.46" x2="1284" y2="163.46" stroke="#b6c4a0" stroke-width="1.2" />
<line x1="775" y1="152.24" x2="1284" y2="152.24" stroke="#b6c4a0" stroke-width="1.2" />
<line x1="775" y1="141.02" x2="1284" y2="141.02" stroke="#b6c4a0" stroke-width="1.2" />
<path d="M775,185.9 L1284,185.9 L1270,198.20000000000002 L761,198.20000000000002 Z" fill="url(#gFloor)"/>
<path d="M775,185.9 L1284,185.9 L1270,198.20000000000002 L761,198.20000000000002 Z" fill="url(#gFloorV)"/>
<rect x="761" y="198.20000000000002" width="509" height="8.8" fill="url(#gSlab)" />
<path d="M1270,198.20000000000002 L1284,185.9 L1284,194.70000000000002 L1270,207.00000000000003 Z" fill="#949a86"/>
<text x="771.3" y="133.1" font-size="8.7" fill="#333" text-anchor="end" textLength="13.4" lengthAdjust="spacingAndGlyphs" >10</text>
<text x="771.3" y="144.3" font-size="8.7" fill="#333" text-anchor="end" textLength="6.7" lengthAdjust="spacingAndGlyphs" >8</text>
<text x="771.3" y="155.5" font-size="8.7" fill="#333" text-anchor="end" textLength="6.7" lengthAdjust="spacingAndGlyphs" >6</text>
<text x="771.3" y="166.8" font-size="8.7" fill="#333" text-anchor="end" textLength="6.7" lengthAdjust="spacingAndGlyphs" >4</text>
<text x="771.3" y="178.0" font-size="8.7" fill="#333" text-anchor="end" textLength="6.7" lengthAdjust="spacingAndGlyphs" >2</text>
<text x="771.3" y="189.2" font-size="8.7" fill="#333" text-anchor="end" textLength="6.7" lengthAdjust="spacingAndGlyphs" >0</text>
<path d="M808.3,180.32 L822.5,180.32 L822.5,185.9 L808.3,185.9 Z" fill="#000" fill-opacity="0.22" filter="url(#blur2)"/>
<rect x="792.30" y="192.62" width="13.20" height="5.58" fill="url(#bBlueF)"/>
<path d="M805.50,192.62 L819.50,180.32 L819.50,185.90 L805.50,198.20 Z" fill="#86a8cc"/>
<path d="M792.30,192.62 L806.30,180.32 L819.50,180.32 L805.50,192.62 Z" fill="url(#tBlue)"/>
<path d="M822.5,174.74 L836.7,174.74 L836.7,185.9 L822.5,185.9 Z" fill="#000" fill-opacity="0.22" filter="url(#blur2)"/>
<rect x="806.50" y="187.04" width="13.20" height="11.16" fill="url(#bYelF)"/>
<path d="M819.70,187.04 L833.70,174.74 L833.70,185.90 L819.70,198.20 Z" fill="#c99410"/>
<path d="M806.50,187.04 L820.50,174.74 L833.70,174.74 L819.70,187.04 Z" fill="url(#tYel)"/>
<path d="M836.6999999999999,180.32 L850.9,180.32 L850.9,185.9 L836.6999999999999,185.9 Z" fill="#000" fill-opacity="0.22" filter="url(#blur2)"/>
<rect x="820.70" y="192.62" width="13.20" height="5.58" fill="url(#bGrnF)"/>
<path d="M833.90,192.62 L847.90,180.32 L847.90,185.90 L833.90,198.20 Z" fill="#5f8a08"/>
<path d="M820.70,192.62 L834.70,180.32 L847.90,180.32 L833.90,192.62 Z" fill="url(#tGrn)"/>
<path d="M850.9,169.16 L865.1,169.16 L865.1,185.9 L850.9,185.9 Z" fill="#000" fill-opacity="0.22" filter="url(#blur2)"/>
<rect x="834.90" y="181.46" width="13.20" height="16.74" fill="url(#bOrgF)"/>
<path d="M848.10,181.46 L862.10,169.16 L862.10,185.90 L848.10,198.20 Z" fill="#c66a34"/>
<path d="M834.90,181.46 L848.90,169.16 L862.10,169.16 L848.10,181.46 Z" fill="url(#tOrg)"/>
<path d="M865.0999999999999,180.32 L879.3,180.32 L879.3,185.9 L865.0999999999999,185.9 Z" fill="#000" fill-opacity="0.22" filter="url(#blur2)"/>
<rect x="849.10" y="192.62" width="13.20" height="5.58" fill="url(#bTealF)"/>
<path d="M862.30,192.62 L876.30,180.32 L876.30,185.90 L862.30,198.20 Z" fill="#005e5e"/>
<path d="M849.10,192.62 L863.10,180.32 L876.30,180.32 L862.30,192.62 Z" fill="url(#tTeal)"/>
<path d="M902.42,180.32 L916.62,180.32 L916.62,185.9 L902.42,185.9 Z" fill="#000" fill-opacity="0.22" filter="url(#blur2)"/>
<rect x="886.42" y="192.62" width="13.20" height="5.58" fill="url(#bBlueF)"/>
<path d="M899.62,192.62 L913.62,180.32 L913.62,185.90 L899.62,198.20 Z" fill="#86a8cc"/>
<path d="M886.42,192.62 L900.42,180.32 L913.62,180.32 L899.62,192.62 Z" fill="url(#tBlue)"/>
<path d="M930.8199999999999,169.16 L945.02,169.16 L945.02,185.9 L930.8199999999999,185.9 Z" fill="#000" fill-opacity="0.22" filter="url(#blur2)"/>
<rect x="914.82" y="181.46" width="13.20" height="16.74" fill="url(#bGrnF)"/>
<path d="M928.02,181.46 L942.02,169.16 L942.02,185.90 L928.02,198.20 Z" fill="#5f8a08"/>
<path d="M914.82,181.46 L928.82,169.16 L942.02,169.16 L928.02,181.46 Z" fill="url(#tGrn)"/>
<path d="M945.02,163.58 L959.22,163.58 L959.22,185.9 L945.02,185.9 Z" fill="#000" fill-opacity="0.22" filter="url(#blur2)"/>
<rect x="929.02" y="175.88" width="13.20" height="22.32" fill="url(#bOrgF)"/>
<path d="M942.22,175.88 L956.22,163.58 L956.22,185.90 L942.22,198.20 Z" fill="#c66a34"/>
<path d="M929.02,175.88 L943.02,163.58 L956.22,163.58 L942.22,175.88 Z" fill="url(#tOrg)"/>
<path d="M959.2199999999999,174.74 L973.42,174.74 L973.42,185.9 L959.2199999999999,185.9 Z" fill="#000" fill-opacity="0.22" filter="url(#blur2)"/>
<rect x="943.22" y="187.04" width="13.20" height="11.16" fill="url(#bTealF)"/>
<path d="M956.42,187.04 L970.42,174.74 L970.42,185.90 L956.42,198.20 Z" fill="#005e5e"/>
<path d="M943.22,187.04 L957.22,174.74 L970.42,174.74 L956.42,187.04 Z" fill="url(#tTeal)"/>
<path d="M996.54,169.16 L1010.74,169.16 L1010.74,185.9 L996.54,185.9 Z" fill="#000" fill-opacity="0.22" filter="url(#blur2)"/>
<rect x="980.54" y="181.46" width="13.20" height="16.74" fill="url(#bBlueF)"/>
<path d="M993.74,181.46 L1007.74,169.16 L1007.74,185.90 L993.74,198.20 Z" fill="#86a8cc"/>
<path d="M980.54,181.46 L994.54,169.16 L1007.74,169.16 L993.74,181.46 Z" fill="url(#tBlue)"/>
<path d="M1010.74,174.74 L1024.94,174.74 L1024.94,185.9 L1010.74,185.9 Z" fill="#000" fill-opacity="0.22" filter="url(#blur2)"/>
<rect x="994.74" y="187.04" width="13.20" height="11.16" fill="url(#bYelF)"/>
<path d="M1007.94,187.04 L1021.94,174.74 L1021.94,185.90 L1007.94,198.20 Z" fill="#c99410"/>
<path d="M994.74,187.04 L1008.74,174.74 L1021.94,174.74 L1007.94,187.04 Z" fill="url(#tYel)"/>
<path d="M1024.94,141.26 L1039.1399999999999,141.26 L1039.1399999999999,185.9 L1024.94,185.9 Z" fill="#000" fill-opacity="0.22" filter="url(#blur2)"/>
<rect x="1008.94" y="153.56" width="13.20" height="44.64" fill="url(#bGrnF)"/>
<path d="M1022.14,153.56 L1036.14,141.26 L1036.14,185.90 L1022.14,198.20 Z" fill="#5f8a08"/>
<path d="M1008.94,153.56 L1022.94,141.26 L1036.14,141.26 L1022.14,153.56 Z" fill="url(#tGrn)"/>
<path d="M1039.1399999999999,158.0 L1053.34,158.0 L1053.34,185.9 L1039.1399999999999,185.9 Z" fill="#000" fill-opacity="0.22" filter="url(#blur2)"/>
<rect x="1023.14" y="170.30" width="13.20" height="27.90" fill="url(#bOrgF)"/>
<path d="M1036.34,170.30 L1050.34,158.00 L1050.34,185.90 L1036.34,198.20 Z" fill="#c66a34"/>
<path d="M1023.14,170.30 L1037.14,158.00 L1050.34,158.00 L1036.34,170.30 Z" fill="url(#tOrg)"/>
<path d="M1053.34,158.0 L1067.54,158.0 L1067.54,185.9 L1053.34,185.9 Z" fill="#000" fill-opacity="0.22" filter="url(#blur2)"/>
<rect x="1037.34" y="170.30" width="13.20" height="27.90" fill="url(#bTealF)"/>
<path d="M1050.54,170.30 L1064.54,158.00 L1064.54,185.90 L1050.54,198.20 Z" fill="#005e5e"/>
<path d="M1037.34,170.30 L1051.34,158.00 L1064.54,158.00 L1050.54,170.30 Z" fill="url(#tTeal)"/>
<path d="M1090.6599999999999,180.32 L1104.86,180.32 L1104.86,185.9 L1090.6599999999999,185.9 Z" fill="#000" fill-opacity="0.22" filter="url(#blur2)"/>
<rect x="1074.66" y="192.62" width="13.20" height="5.58" fill="url(#bBlueF)"/>
<path d="M1087.86,192.62 L1101.86,180.32 L1101.86,185.90 L1087.86,198.20 Z" fill="#86a8cc"/>
<path d="M1074.66,192.62 L1088.66,180.32 L1101.86,180.32 L1087.86,192.62 Z" fill="url(#tBlue)"/>
<path d="M1119.06,146.84 L1133.26,146.84 L1133.26,185.9 L1119.06,185.9 Z" fill="#000" fill-opacity="0.22" filter="url(#blur2)"/>
<rect x="1103.06" y="159.14" width="13.20" height="39.06" fill="url(#bGrnF)"/>
<path d="M1116.26,159.14 L1130.26,146.84 L1130.26,185.90 L1116.26,198.20 Z" fill="#5f8a08"/>
<path d="M1103.06,159.14 L1117.06,146.84 L1130.26,146.84 L1116.26,159.14 Z" fill="url(#tGrn)"/>
<path d="M1133.2599999999998,163.58 L1147.4599999999998,163.58 L1147.4599999999998,185.9 L1133.2599999999998,185.9 Z" fill="#000" fill-opacity="0.22" filter="url(#blur2)"/>
<rect x="1117.26" y="175.88" width="13.20" height="22.32" fill="url(#bOrgF)"/>
<path d="M1130.46,175.88 L1144.46,163.58 L1144.46,185.90 L1130.46,198.20 Z" fill="#c66a34"/>
<path d="M1117.26,175.88 L1131.26,163.58 L1144.46,163.58 L1130.46,175.88 Z" fill="url(#tOrg)"/>
<path d="M1147.4599999999998,163.58 L1161.6599999999999,163.58 L1161.6599999999999,185.9 L1147.4599999999998,185.9 Z" fill="#000" fill-opacity="0.22" filter="url(#blur2)"/>
<rect x="1131.46" y="175.88" width="13.20" height="22.32" fill="url(#bTealF)"/>
<path d="M1144.66,175.88 L1158.66,163.58 L1158.66,185.90 L1144.66,198.20 Z" fill="#005e5e"/>
<path d="M1131.46,175.88 L1145.46,163.58 L1158.66,163.58 L1144.66,175.88 Z" fill="url(#tTeal)"/>
<path d="M1184.78,174.74 L1198.98,174.74 L1198.98,185.9 L1184.78,185.9 Z" fill="#000" fill-opacity="0.22" filter="url(#blur2)"/>
<rect x="1168.78" y="187.04" width="13.20" height="11.16" fill="url(#bBlueF)"/>
<path d="M1181.98,187.04 L1195.98,174.74 L1195.98,185.90 L1181.98,198.20 Z" fill="#86a8cc"/>
<path d="M1168.78,187.04 L1182.78,174.74 L1195.98,174.74 L1181.98,187.04 Z" fill="url(#tBlue)"/>
<path d="M1198.98,163.58 L1213.18,163.58 L1213.18,185.9 L1198.98,185.9 Z" fill="#000" fill-opacity="0.22" filter="url(#blur2)"/>
<rect x="1182.98" y="175.88" width="13.20" height="22.32" fill="url(#bYelF)"/>
<path d="M1196.18,175.88 L1210.18,163.58 L1210.18,185.90 L1196.18,198.20 Z" fill="#c99410"/>
<path d="M1182.98,175.88 L1196.98,163.58 L1210.18,163.58 L1196.18,175.88 Z" fill="url(#tYel)"/>
<path d="M1213.18,163.58 L1227.38,163.58 L1227.38,185.9 L1213.18,185.9 Z" fill="#000" fill-opacity="0.22" filter="url(#blur2)"/>
<rect x="1197.18" y="175.88" width="13.20" height="22.32" fill="url(#bGrnF)"/>
<path d="M1210.38,175.88 L1224.38,163.58 L1224.38,185.90 L1210.38,198.20 Z" fill="#5f8a08"/>
<path d="M1197.18,175.88 L1211.18,163.58 L1224.38,163.58 L1210.38,175.88 Z" fill="url(#tGrn)"/>
<path d="M1227.3799999999999,146.84 L1241.58,146.84 L1241.58,185.9 L1227.3799999999999,185.9 Z" fill="#000" fill-opacity="0.22" filter="url(#blur2)"/>
<rect x="1211.38" y="159.14" width="13.20" height="39.06" fill="url(#bOrgF)"/>
<path d="M1224.58,159.14 L1238.58,146.84 L1238.58,185.90 L1224.58,198.20 Z" fill="#c66a34"/>
<path d="M1211.38,159.14 L1225.38,146.84 L1238.58,146.84 L1224.58,159.14 Z" fill="url(#tOrg)"/>
<path d="M1241.58,163.58 L1255.78,163.58 L1255.78,185.9 L1241.58,185.9 Z" fill="#000" fill-opacity="0.22" filter="url(#blur2)"/>
<rect x="1225.58" y="175.88" width="13.20" height="22.32" fill="url(#bTealF)"/>
<path d="M1238.78,175.88 L1252.78,163.58 L1252.78,185.90 L1238.78,198.20 Z" fill="#005e5e"/>
<path d="M1225.58,175.88 L1239.58,163.58 L1252.78,163.58 L1238.78,175.88 Z" fill="url(#tTeal)"/>
<text x="812.4" y="175.0" font-size="8.7" fill="#333" text-anchor="middle" textLength="6.7" lengthAdjust="spacingAndGlyphs" >1</text>
<text x="826.6" y="169.4" font-size="8.7" fill="#333" text-anchor="middle" textLength="6.7" lengthAdjust="spacingAndGlyphs" >2</text>
<text x="840.8" y="175.0" font-size="8.7" fill="#333" text-anchor="middle" textLength="6.7" lengthAdjust="spacingAndGlyphs" >1</text>
<text x="855.0" y="163.9" font-size="8.7" fill="#333" text-anchor="middle" textLength="6.7" lengthAdjust="spacingAndGlyphs" >3</text>
<text x="869.2" y="175.0" font-size="8.7" fill="#333" text-anchor="middle" textLength="6.7" lengthAdjust="spacingAndGlyphs" >1</text>
<text x="906.5" y="175.0" font-size="8.7" fill="#333" text-anchor="middle" textLength="6.7" lengthAdjust="spacingAndGlyphs" >1</text>
<text x="934.9" y="163.9" font-size="8.7" fill="#333" text-anchor="middle" textLength="6.7" lengthAdjust="spacingAndGlyphs" >3</text>
<text x="949.1" y="158.3" font-size="8.7" fill="#333" text-anchor="middle" textLength="6.7" lengthAdjust="spacingAndGlyphs" >4</text>
<text x="963.3" y="169.4" font-size="8.7" fill="#333" text-anchor="middle" textLength="6.7" lengthAdjust="spacingAndGlyphs" >2</text>
<text x="1000.6" y="163.9" font-size="8.7" fill="#333" text-anchor="middle" textLength="6.7" lengthAdjust="spacingAndGlyphs" >3</text>
<text x="1014.8" y="169.4" font-size="8.7" fill="#333" text-anchor="middle" textLength="6.7" lengthAdjust="spacingAndGlyphs" >2</text>
<text x="1015.5" y="164.3" font-size="8.7" fill="#333" text-anchor="middle" textLength="6.7" lengthAdjust="spacingAndGlyphs" >8</text>
<text x="1043.2" y="152.7" font-size="8.7" fill="#333" text-anchor="middle" textLength="6.7" lengthAdjust="spacingAndGlyphs" >5</text>
<text x="1057.4" y="152.7" font-size="8.7" fill="#333" text-anchor="middle" textLength="6.7" lengthAdjust="spacingAndGlyphs" >5</text>
<text x="1094.8" y="175.0" font-size="8.7" fill="#333" text-anchor="middle" textLength="6.7" lengthAdjust="spacingAndGlyphs" >1</text>
<text x="1123.2" y="141.5" font-size="8.7" fill="#333" text-anchor="middle" textLength="6.7" lengthAdjust="spacingAndGlyphs" >7</text>
<text x="1137.4" y="158.3" font-size="8.7" fill="#333" text-anchor="middle" textLength="6.7" lengthAdjust="spacingAndGlyphs" >4</text>
<text x="1151.6" y="158.3" font-size="8.7" fill="#333" text-anchor="middle" textLength="6.7" lengthAdjust="spacingAndGlyphs" >4</text>
<text x="1188.9" y="169.4" font-size="8.7" fill="#333" text-anchor="middle" textLength="6.7" lengthAdjust="spacingAndGlyphs" >2</text>
<text x="1203.1" y="158.3" font-size="8.7" fill="#333" text-anchor="middle" textLength="6.7" lengthAdjust="spacingAndGlyphs" >4</text>
<text x="1217.3" y="158.3" font-size="8.7" fill="#333" text-anchor="middle" textLength="6.7" lengthAdjust="spacingAndGlyphs" >4</text>
<text x="1231.5" y="141.5" font-size="8.7" fill="#333" text-anchor="middle" textLength="6.7" lengthAdjust="spacingAndGlyphs" >7</text>
<text x="1245.7" y="158.3" font-size="8.7" fill="#333" text-anchor="middle" textLength="6.7" lengthAdjust="spacingAndGlyphs" >4</text>
<text x="827.3" y="220.8" font-size="8.7" fill="#333" text-anchor="middle" textLength="32.6" lengthAdjust="spacingAndGlyphs" >1-Low</text>
<text x="921.4" y="220.8" font-size="8.7" fill="#333" text-anchor="middle" textLength="55.0" lengthAdjust="spacingAndGlyphs" >2-Medium</text>
<text x="1015.5" y="220.8" font-size="8.7" fill="#333" text-anchor="middle" textLength="36.3" lengthAdjust="spacingAndGlyphs" >3-High</text>
<text x="1109.7" y="220.8" font-size="8.7" fill="#333" text-anchor="middle" textLength="63.6" lengthAdjust="spacingAndGlyphs" >4-Very High</text>
<text x="1203.8" y="220.8" font-size="8.7" fill="#333" text-anchor="middle" textLength="48.4" lengthAdjust="spacingAndGlyphs" >5-Urgent</text>
<text x="1028.8" y="239.6" font-size="9.8" fill="#222" font-weight="bold" text-anchor="middle" textLength="42.4" lengthAdjust="spacingAndGlyphs" >Priority</text>
<g transform="translate(742.5,168.5) rotate(-90)"><text x="0" y="3.5" font-size="10.3" fill="#333" text-anchor="middle" textLength="25.5" lengthAdjust="spacingAndGlyphs">Count</text></g>
<rect x="837.8" y="250.2" width="392.4" height="18.3" fill="#888" fill-opacity="0.6" filter="url(#shadow)"/>
<rect x="835.8" y="248.2" width="392.4" height="18.3" fill="#eceee7" stroke="#c9ccbf"/>
<rect x="841.7" y="255" width="4.5" height="4.5" fill="#a9d2f2" />
<text x="850.6" y="261.2" font-size="8.7" fill="#333" textLength="31.4" lengthAdjust="spacingAndGlyphs" >1-Low</text>
<rect x="907" y="255" width="4.5" height="4.5" fill="#f3b200" />
<text x="915.0" y="261.2" font-size="8.7" fill="#333" textLength="55.2" lengthAdjust="spacingAndGlyphs" >2-Medium</text>
<rect x="996" y="255" width="4.5" height="4.5" fill="#7fb41c" />
<text x="1004.4" y="261.2" font-size="8.7" fill="#333" textLength="36.0" lengthAdjust="spacingAndGlyphs" >3-High</text>
<rect x="1066" y="255" width="4.5" height="4.5" fill="#f6864c" />
<text x="1074.3" y="261.2" font-size="8.7" fill="#333" textLength="64.7" lengthAdjust="spacingAndGlyphs" >4-Very High</text>
<rect x="1164" y="255" width="4.5" height="4.5" fill="#118686" />
<text x="1172.8" y="261.2" font-size="8.7" fill="#333" textLength="48.6" lengthAdjust="spacingAndGlyphs" >5-Critical</text>
<rect x="82.3" y="365.8" width="160.0" height="17.599999999999966" fill="#ececec" />
<rect x="82.8" y="385.3" width="159.0" height="17.099999999999966" fill="#fff" stroke="#d9d9d9"/>
<rect x="82.8" y="405.2" width="159.0" height="17.69999999999999" fill="#fff" stroke="#d9d9d9"/>
<rect x="82.8" y="425.6" width="159.0" height="17.69999999999999" fill="#fff" stroke="#d9d9d9"/>
<rect x="243.8" y="365.8" width="119.69999999999999" height="17.599999999999966" fill="#ececec" />
<rect x="244.3" y="385.3" width="118.69999999999999" height="17.099999999999966" fill="#fff" stroke="#d9d9d9"/>
<rect x="244.3" y="405.2" width="118.69999999999999" height="17.69999999999999" fill="#fff" stroke="#d9d9d9"/>
<rect x="244.3" y="425.6" width="118.69999999999999" height="17.69999999999999" fill="#fff" stroke="#d9d9d9"/>
<rect x="365" y="365.8" width="119.5" height="17.599999999999966" fill="#ececec" />
<rect x="365.5" y="385.3" width="118.5" height="17.099999999999966" fill="#fff" stroke="#d9d9d9"/>
<rect x="365.5" y="405.2" width="118.5" height="17.69999999999999" fill="#fff" stroke="#d9d9d9"/>
<rect x="365.5" y="425.6" width="118.5" height="17.69999999999999" fill="#fff" stroke="#d9d9d9"/>
<rect x="486.7" y="365.8" width="119.50000000000006" height="17.599999999999966" fill="#ececec" />
<rect x="487.2" y="385.3" width="118.50000000000006" height="17.099999999999966" fill="#fff" stroke="#d9d9d9"/>
<rect x="487.2" y="405.2" width="118.50000000000006" height="17.69999999999999" fill="#fff" stroke="#d9d9d9"/>
<rect x="487.2" y="425.6" width="118.50000000000006" height="17.69999999999999" fill="#fff" stroke="#d9d9d9"/>
<rect x="608" y="365.8" width="120.5" height="17.599999999999966" fill="#ececec" />
<rect x="608.5" y="385.3" width="119.5" height="17.099999999999966" fill="#fff" stroke="#d9d9d9"/>
<rect x="608.5" y="405.2" width="119.5" height="17.69999999999999" fill="#fff" stroke="#d9d9d9"/>
<rect x="608.5" y="425.6" width="119.5" height="17.69999999999999" fill="#fff" stroke="#d9d9d9"/>
<rect x="729.8" y="365.8" width="121.70000000000005" height="17.599999999999966" fill="#ececec" />
<rect x="730.3" y="385.3" width="120.70000000000005" height="17.099999999999966" fill="#fff" stroke="#d9d9d9"/>
<rect x="730.3" y="405.2" width="120.70000000000005" height="17.69999999999999" fill="#fff" stroke="#d9d9d9"/>
<rect x="730.3" y="425.6" width="120.70000000000005" height="17.69999999999999" fill="#fff" stroke="#d9d9d9"/>
<text x="85.8" y="377.5" font-size="10.4" fill="#333" font-weight="bold" textLength="138.7" lengthAdjust="spacingAndGlyphs" >Reviewer / Review Result</text>
<text x="247.3" y="377.5" font-size="10.4" fill="#333" font-weight="bold" textLength="62.7" lengthAdjust="spacingAndGlyphs" >Time Spent</text>
<text x="368.4" y="377.5" font-size="10.4" fill="#333" font-weight="bold" textLength="53.5" lengthAdjust="spacingAndGlyphs" >Approved</text>
<text x="489.7" y="377.5" font-size="10.4" fill="#333" font-weight="bold" textLength="48.1" lengthAdjust="spacingAndGlyphs" >Rejected</text>
<text x="611.1" y="377.5" font-size="10.4" fill="#333" font-weight="bold" textLength="85.6" lengthAdjust="spacingAndGlyphs" >NeedMoreWork</text>
<text x="733.4" y="377.5" font-size="10.4" fill="#333" font-weight="bold" textLength="26.7" lengthAdjust="spacingAndGlyphs" >Total</text>
<text x="87.3" y="397.4" font-size="10.6" fill="#222" font-weight="bold" textLength="77.7" lengthAdjust="spacingAndGlyphs" >Sam Reviewer</text>
<text x="86.7" y="417.5" font-size="10.6" fill="#222" font-weight="bold" textLength="81.7" lengthAdjust="spacingAndGlyphs" >Tony Reviewer</text>
<text x="86.7" y="437.4" font-size="10.6" fill="#222" font-weight="bold" textLength="62.8" lengthAdjust="spacingAndGlyphs" >Grand Total</text>
<text x="336.9" y="397.4" font-size="10" fill="#333" text-anchor="end" textLength="64.6" lengthAdjust="spacingAndGlyphs" >151.00 (Hrs.)</text>
<text x="457.5" y="397.4" font-size="10" fill="#333" text-anchor="end" textLength="12.3" lengthAdjust="spacingAndGlyphs" >15</text>
<text x="579.6" y="397.4" font-size="10" fill="#333" text-anchor="end" textLength="6.2" lengthAdjust="spacingAndGlyphs" >5</text>
<text x="702.2" y="397.4" font-size="10" fill="#333" text-anchor="end" textLength="6.2" lengthAdjust="spacingAndGlyphs" >5</text>
<text x="824.2" y="397.4" font-size="10" fill="#333" text-anchor="end" textLength="12.3" lengthAdjust="spacingAndGlyphs" >25</text>
<text x="336.9" y="417.5" font-size="10" fill="#333" text-anchor="end" textLength="58.5" lengthAdjust="spacingAndGlyphs" >70.00 (Hrs.)</text>
<text x="457.5" y="417.5" font-size="10" fill="#333" text-anchor="end" textLength="12.3" lengthAdjust="spacingAndGlyphs" >14</text>
<text x="579.6" y="417.5" font-size="10" fill="#333" text-anchor="end" textLength="6.2" lengthAdjust="spacingAndGlyphs" >2</text>
<text x="702.2" y="417.5" font-size="10" fill="#333" text-anchor="end" textLength="6.2" lengthAdjust="spacingAndGlyphs" >7</text>
<text x="824.2" y="417.5" font-size="10" fill="#333" text-anchor="end" textLength="12.3" lengthAdjust="spacingAndGlyphs" >23</text>
<text x="336.9" y="437.4" font-size="10" fill="#333" font-weight="bold" text-anchor="end" textLength="65.9" lengthAdjust="spacingAndGlyphs" >221.00 (Hrs.)</text>
<text x="457.5" y="437.4" font-size="10" fill="#333" font-weight="bold" text-anchor="end" textLength="12.3" lengthAdjust="spacingAndGlyphs" >29</text>
<text x="579.6" y="437.4" font-size="10" fill="#333" font-weight="bold" text-anchor="end" textLength="6.2" lengthAdjust="spacingAndGlyphs" >7</text>
<text x="702.2" y="437.4" font-size="10" fill="#333" font-weight="bold" text-anchor="end" textLength="12.3" lengthAdjust="spacingAndGlyphs" >12</text>
<text x="824.2" y="437.4" font-size="10" fill="#333" font-weight="bold" text-anchor="end" textLength="12.3" lengthAdjust="spacingAndGlyphs" >48</text>
<rect x="122.8" y="492.3" width="1212.4" height="47.599999999999966" fill="url(#gWall3)" />
<rect x="122.8" y="492.3" width="1212.4" height="47.599999999999966" fill="url(#gWallV)" />
<path d="M1335.2,492.3 L1337.7,494.3 L1337.7,537.9 L1335.2,539.9 Z" fill="#a9ae9e"/>
<line x1="122.8" y1="530.38" x2="1335.2" y2="530.38" stroke="#b4c0a0" stroke-width="1.1" />
<line x1="122.8" y1="520.86" x2="1335.2" y2="520.86" stroke="#b4c0a0" stroke-width="1.1" />
<line x1="122.8" y1="511.34" x2="1335.2" y2="511.34" stroke="#b4c0a0" stroke-width="1.1" />
<line x1="122.8" y1="501.82" x2="1335.2" y2="501.82" stroke="#b4c0a0" stroke-width="1.1" />
<path d="M122.8,539.9 L1335.2,539.9 L1323.7,548.6 L111.3,548.6 Z" fill="url(#gFloor3)"/>
<path d="M122.8,539.9 L1335.2,539.9 L1323.7,548.6 L111.3,548.6 Z" fill="url(#gFloorV)"/>
<rect x="111.3" y="548.6" width="1212.4" height="8.8" fill="url(#gSlab)" />
<path d="M1323.7,548.6 L1335.2,539.9 L1335.2,548.6999999999999 L1323.7,557.4 Z" fill="#949a86"/>
<text x="118.4" y="495.7" font-size="9.4" fill="#333" text-anchor="end" textLength="14.0" lengthAdjust="spacingAndGlyphs" >20</text>
<text x="118.4" y="505.2" font-size="9.4" fill="#333" text-anchor="end" textLength="14.0" lengthAdjust="spacingAndGlyphs" >16</text>
<text x="118.4" y="514.7" font-size="9.4" fill="#333" text-anchor="end" textLength="14.0" lengthAdjust="spacingAndGlyphs" >12</text>
<text x="118.4" y="524.3" font-size="9.4" fill="#333" text-anchor="end" textLength="7.0" lengthAdjust="spacingAndGlyphs" >8</text>
<text x="118.4" y="533.8" font-size="9.4" fill="#333" text-anchor="end" textLength="7.0" lengthAdjust="spacingAndGlyphs" >4</text>
<text x="118.4" y="543.3" font-size="9.4" fill="#333" text-anchor="end" textLength="7.0" lengthAdjust="spacingAndGlyphs" >0</text>
<path d="M342.5,504.2000000000001 L433.8,504.2000000000001 L433.8,539.9 L342.5,539.9 Z" fill="#000" fill-opacity="0.22" filter="url(#blur2)"/>
<rect x="330.00" y="512.90" width="90.30" height="35.70" fill="url(#cBlueF)"/>
<path d="M420.30,512.90 L430.80,504.20 L430.80,539.90 L420.30,548.60 Z" fill="#6f8aa6"/>
<path d="M330.00,512.90 L340.50,504.20 L430.80,504.20 L420.30,512.90 Z" fill="url(#tBlue)"/>
<path d="M442.8,528.0 L534.1,528.0 L534.1,539.9 L442.8,539.9 Z" fill="#000" fill-opacity="0.22" filter="url(#blur2)"/>
<rect x="430.30" y="536.70" width="90.30" height="11.90" fill="url(#cYelF)"/>
<path d="M520.60,536.70 L531.10,528.00 L531.10,539.90 L520.60,548.60 Z" fill="#b98500"/>
<path d="M430.30,536.70 L440.80,528.00 L531.10,528.00 L520.60,536.70 Z" fill="url(#tYel)"/>
<path d="M543.1,528.0 L634.4,528.0 L634.4,539.9 L543.1,539.9 Z" fill="#000" fill-opacity="0.22" filter="url(#blur2)"/>
<rect x="530.60" y="536.70" width="90.30" height="11.90" fill="url(#cGrnF)"/>
<path d="M620.90,536.70 L631.40,528.00 L631.40,539.90 L620.90,548.60 Z" fill="#4f7a00"/>
<path d="M530.60,536.70 L541.10,528.00 L631.40,528.00 L620.90,536.70 Z" fill="url(#tGrn)"/>
<path d="M827.4,506.5800000000001 L918.6999999999999,506.5800000000001 L918.6999999999999,539.9 L827.4,539.9 Z" fill="#000" fill-opacity="0.22" filter="url(#blur2)"/>
<rect x="814.90" y="515.28" width="90.30" height="33.32" fill="url(#cBlueF)"/>
<path d="M905.20,515.28 L915.70,506.58 L915.70,539.90 L905.20,548.60 Z" fill="#6f8aa6"/>
<path d="M814.90,515.28 L825.40,506.58 L915.70,506.58 L905.20,515.28 Z" fill="url(#tBlue)"/>
<path d="M927.6999999999999,535.14 L1018.9999999999999,535.14 L1018.9999999999999,539.9 L927.6999999999999,539.9 Z" fill="#000" fill-opacity="0.22" filter="url(#blur2)"/>
<rect x="915.20" y="543.84" width="90.30" height="4.76" fill="url(#cYelF)"/>
<path d="M1005.50,543.84 L1016.00,535.14 L1016.00,539.90 L1005.50,548.60 Z" fill="#b98500"/>
<path d="M915.20,543.84 L925.70,535.14 L1016.00,535.14 L1005.50,543.84 Z" fill="url(#tYel)"/>
<path d="M1028.0,523.24 L1119.3,523.24 L1119.3,539.9 L1028.0,539.9 Z" fill="#000" fill-opacity="0.22" filter="url(#blur2)"/>
<rect x="1015.50" y="531.94" width="90.30" height="16.66" fill="url(#cGrnF)"/>
<path d="M1105.80,531.94 L1116.30,523.24 L1116.30,539.90 L1105.80,548.60 Z" fill="#4f7a00"/>
<path d="M1015.50,531.94 L1026.00,523.24 L1116.30,523.24 L1105.80,531.94 Z" fill="url(#tGrn)"/>
<text x="375.3" y="525.1" font-size="8.96" fill="#333" text-anchor="middle" textLength="13.7" lengthAdjust="spacingAndGlyphs" >15</text>
<text x="484.3" y="521.4" font-size="8.96" fill="#333" text-anchor="middle" textLength="6.9" lengthAdjust="spacingAndGlyphs" >5</text>
<text x="585.0" y="521.4" font-size="8.96" fill="#333" text-anchor="middle" textLength="6.9" lengthAdjust="spacingAndGlyphs" >5</text>
<text x="858.0" y="527.7" font-size="8.96" fill="#333" text-anchor="middle" textLength="13.7" lengthAdjust="spacingAndGlyphs" >14</text>
<text x="969.0" y="528.7" font-size="8.96" fill="#333" text-anchor="middle" textLength="6.9" lengthAdjust="spacingAndGlyphs" >2</text>
<text x="1069.2" y="516.5" font-size="8.96" fill="#333" text-anchor="middle" textLength="6.9" lengthAdjust="spacingAndGlyphs" >7</text>
<text x="474.5" y="570.5" font-size="8.96" fill="#333" text-anchor="middle" textLength="79.2" lengthAdjust="spacingAndGlyphs" >Sam Reviewer</text>
<text x="957.7" y="570.2" font-size="8.96" fill="#333" text-anchor="middle" textLength="79.8" lengthAdjust="spacingAndGlyphs" >Tony Reviewer</text>
<text x="728.0" y="588.8" font-size="9.5" fill="#222" font-weight="bold" text-anchor="middle" textLength="51.4" lengthAdjust="spacingAndGlyphs" >Reviewer</text>
<g transform="translate(89.8,525) rotate(-90)"><text x="0" y="4" font-size="10.6" fill="#333" text-anchor="middle" textLength="25.2" lengthAdjust="spacingAndGlyphs">Count</text></g>
<rect x="597" y="600.1" width="271.3" height="18.6" fill="#888" fill-opacity="0.6" filter="url(#shadow)"/>
<rect x="595" y="598.1" width="271.3" height="18.6" fill="#eceee7" stroke="#c9ccbf"/>
<rect x="600.7" y="605.2" width="4.5" height="4.5" fill="#a9d2f2" />
<text x="609.0" y="610.8" font-size="8.27" fill="#333" textLength="51.5" lengthAdjust="spacingAndGlyphs" >Approved</text>
<rect x="686" y="605.2" width="4.5" height="4.5" fill="#f3b200" />
<text x="694.5" y="610.8" font-size="8.27" fill="#333" textLength="47.0" lengthAdjust="spacingAndGlyphs" >Rejected</text>
<rect x="767.5" y="605.2" width="4.5" height="4.5" fill="#7fb41c" />
<text x="774.8" y="610.8" font-size="8.27" fill="#333" textLength="84.2" lengthAdjust="spacingAndGlyphs" >NeedMoreWork</text>
<path d="M552.70,802.50 A195.5,68.8 0 0 1 452.26,862.62 L452.26,876.12 A195.5,68.8 0 0 0 552.70,816.00 Z" fill="url(#pSideClosed)" stroke="#6a3068" stroke-width="0.6"/>
<path d="M452.26,862.62 A195.5,68.8 0 0 1 417.66,867.93 L417.66,881.43 A195.5,68.8 0 0 0 452.26,876.12 Z" fill="url(#pSideImpl)" stroke="#c05048" stroke-width="0.6"/>
<path d="M417.66,867.93 A195.5,68.8 0 0 1 305.89,868.89 L305.89,882.39 A195.5,68.8 0 0 0 417.66,881.43 Z" fill="url(#pSideUD)" stroke="#5ab4b4" stroke-width="0.6"/>
<path d="M305.89,868.89 A195.5,68.8 0 0 1 254.09,860.95 L254.09,874.45 A195.5,68.8 0 0 0 305.89,882.39 Z" fill="url(#pSideDef)" stroke="#f8c098" stroke-width="0.6"/>
<path d="M254.09,860.95 A195.5,68.8 0 0 1 199.07,842.95 L199.07,856.45 A195.5,68.8 0 0 0 254.09,874.45 Z" fill="url(#pSideRej)" stroke="#86aa30" stroke-width="0.6"/>
<path d="M199.07,842.95 A195.5,68.8 0 0 1 161.70,802.50 L161.70,816.00 A195.5,68.8 0 0 0 199.07,856.45 Z" fill="url(#pSideApp)" stroke="#d8a418" stroke-width="0.6"/>
<path d="M357.2,802.5 L468.21,745.87 A195.5,68.8 0 0 1 552.70,802.48 Z" fill="#93b4d4" stroke="#93b4d4" stroke-width="0.7" stroke-linejoin="round"/>
<path d="M357.2,802.5 L552.70,802.48 A195.5,68.8 0 0 1 452.26,862.62 Z" fill="#733372" stroke="#733372" stroke-width="0.7" stroke-linejoin="round"/>
<path d="M357.2,802.5 L452.26,862.62 A195.5,68.8 0 0 1 417.66,867.93 Z" fill="#d25c52" stroke="#d25c52" stroke-width="0.7" stroke-linejoin="round"/>
<path d="M357.2,802.5 L417.66,867.93 A195.5,68.8 0 0 1 305.89,868.89 Z" fill="#2a9090" stroke="#2a9090" stroke-width="0.7" stroke-linejoin="round"/>
<path d="M357.2,802.5 L305.89,868.89 A195.5,68.8 0 0 1 254.09,860.95 Z" fill="#ee9e6c" stroke="#ee9e6c" stroke-width="0.7" stroke-linejoin="round"/>
<path d="M357.2,802.5 L254.09,860.95 A195.5,68.8 0 0 1 199.07,842.95 Z" fill="#93bb32" stroke="#93bb32" stroke-width="0.7" stroke-linejoin="round"/>
<path d="M357.2,802.5 L199.07,842.95 A195.5,68.8 0 0 1 468.21,745.87 Z" fill="#d4a00e" stroke="#d4a00e" stroke-width="0.7" stroke-linejoin="round"/>
<ellipse cx="357.2" cy="802.5" rx="195.5" ry="68.8" fill="url(#pOver)"/>
<polyline points="217.4,754.3 203,747 185.5,745.5" fill="none" stroke="#8a8a8a" stroke-width="1"/>
<text x="114.7" y="749.0" font-size="8.27" fill="#333" textLength="68.3" lengthAdjust="spacingAndGlyphs" >Approved, 29</text>
<polyline points="531.7,770.6 548.5,765.4 554,765.4" fill="none" stroke="#8a8a8a" stroke-width="1"/>
<text x="556.4" y="769.7" font-size="8.27" fill="#333" textLength="65.5" lengthAdjust="spacingAndGlyphs" >Proposed, 10</text>
<polyline points="525.5,844.2 550,857.3 554,857.3" fill="none" stroke="#8a8a8a" stroke-width="1"/>
<text x="556.4" y="860.3" font-size="8.27" fill="#333" textLength="53.5" lengthAdjust="spacingAndGlyphs" >Closed, 11</text>
<polyline points="435,872.4 468,890.8 477,890.8" fill="none" stroke="#8a8a8a" stroke-width="1"/>
<text x="479.8" y="894.0" font-size="8.27" fill="#333" textLength="78.0" lengthAdjust="spacingAndGlyphs" >Implemented, 2</text>
<polyline points="361.5,878 361.5,905.2 366.5,905.2" fill="none" stroke="#8a8a8a" stroke-width="1"/>
<text x="368.5" y="908.4" font-size="8.27" fill="#333" textLength="111.3" lengthAdjust="spacingAndGlyphs" >Under Development, 6</text>
<polyline points="278.8,872.4 260.4,895.4 257,895.4" fill="none" stroke="#8a8a8a" stroke-width="1"/>
<text x="200.0" y="898.8" font-size="8.27" fill="#333" textLength="55.3" lengthAdjust="spacingAndGlyphs" >Deferred, 3</text>
<polyline points="225,859.5 197.5,877 192.5,877" fill="none" stroke="#8a8a8a" stroke-width="1"/>
<text x="134.0" y="880.5" font-size="8.27" fill="#333" textLength="56.3" lengthAdjust="spacingAndGlyphs" >Rejected, 4</text>
<ellipse cx="1011.9" cy="811.5" rx="93.3" ry="81.5" fill="#000" fill-opacity="0.35" filter="url(#blur2)"/>
<path d="M1010.4,809.5 L1094.26,776.96 A91.8,80 0 0 1 1102.20,809.50 Z" fill="#b3d8f6" stroke="#f4f0e0" stroke-width="1"/>
<path d="M1010.4,809.5 L1102.20,809.50 A91.8,80 0 0 1 1071.83,868.95 Z" fill="#fe9150" stroke="#f4f0e0" stroke-width="1"/>
<path d="M1010.4,809.5 L1071.83,868.95 A91.8,80 0 0 1 1000.80,889.06 Z" fill="#92bb12" stroke="#f4f0e0" stroke-width="1"/>
<path d="M1010.4,809.5 L1000.80,889.06 A91.8,80 0 1 1 1094.26,776.96 Z" fill="#f6bd1e" stroke="#f4f0e0" stroke-width="1"/>
<ellipse cx="1010.4" cy="809.5" rx="91.8" ry="80" fill="url(#q5rim)"/>
<ellipse cx="1010.4" cy="809.5" rx="91.8" ry="80" fill="none" stroke="#d9d6cc" stroke-width="1.3"/>
<polyline points="936.2,762 928,748 919,748" fill="none" stroke="#8a8a8a" stroke-width="1"/>
<text x="850.0" y="749.8" font-size="8.27" fill="#333" textLength="66.6" lengthAdjust="spacingAndGlyphs" >Identified, 10</text>
<polyline points="1100.5,796 1114,783 1123,783" fill="none" stroke="#8a8a8a" stroke-width="1"/>
<text x="1125.4" y="785.5" font-size="8.27" fill="#333" textLength="94.4" lengthAdjust="spacingAndGlyphs" >Occured - Issue, 1</text>
<polyline points="1097,840 1108,856.5 1113,856.5" fill="none" stroke="#8a8a8a" stroke-width="1"/>
<text x="1114.7" y="859.8" font-size="8.27" fill="#333" textLength="63.5" lengthAdjust="spacingAndGlyphs" >Evaluated, 2</text>
<polyline points="1038,888 1038,901.5 1044,901.5" fill="none" stroke="#8a8a8a" stroke-width="1"/>
<text x="1045.7" y="904.8" font-size="8.27" fill="#333" textLength="47.0" lengthAdjust="spacingAndGlyphs" >Closed, 2</text>
</svg>
</body></html>
